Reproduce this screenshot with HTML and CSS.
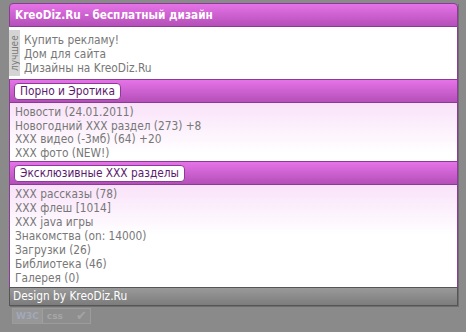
FILE: index.html
```html
<!DOCTYPE HTML>
<html>
<head>
<meta charset="UTF-8">
<link rel="stylesheet" href="styles.css">
</head>
<body>

<div class="page">
    <div class="head">KreoDiz.Ru - бесплатный дизайн</div>

    <!-- лучшее -->
    <div class="best">
        <div class="best-label">лучшее</div>
        <div class="links">
            <a href="#">Купить рекламу!</a>
            <a href="#">Дом для сайта</a>
            <a href="#">Дизайны на KreoDiz.Ru</a>
        </div>
    </div>

    <div class="bar"><span class="tab">Порно и Эротика</span></div>
    <div class="list short">
        <a href="#">Новости (24.01.2011)</a>
        <a href="#">Новогодний XXX раздел (273) +8</a>
        <a href="#">XXX видео (-3мб) (64) +20</a>
        <a href="#">XXX фото (NEW!)</a>
    </div>

    <div class="bar"><span class="tab">Эксклюзивные XXX разделы</span></div>
    <div class="list">
        <a href="#">XXX рассказы (78)</a>
        <a href="#">XXX флеш [1014]</a>
        <a href="#">XXX java игры</a>
        <a href="#">Знакомства (on: 14000)</a>
        <a href="#">Загрузки (26)</a>
        <a href="#">Библиотека (46)</a>
        <a href="#">Галерея (0)</a>
    </div>

    <div class="foot">Design by KreoDiz.Ru</div>
</div>

<div class="badge"><span class="w3c">W3C</span><span class="css">css</span><span class="tick">&#10004;</span></div>

</body>
</html>
```
FILE: styles.css
```css
html, body {
    margin: 0;
    padding: 0;
}

body {
    background-color: #8a8a8a;
    font-family: "DejaVu Sans Condensed", "DejaVu Sans", Tahoma, sans-serif;
    font-size: 11.8px;
}

.page {
    width: 449px;
    margin: 3px 0 0 9px;
    box-shadow: 1px 1px 0 #6e6e6e;
}

.head {
    height: 22px;
    line-height: 22px;
    padding-left: 5px;
    color: white;
    font-weight: bold;
    font-size: 11.7px;
    border: 1px solid #8b3a98;
    border-radius: 4px 4px 0 0;
    background: linear-gradient(#e673e8, #b44fb8);
}

.best {
    display: flex;
    height: 52px;
    background-color: white;
    border-right: 1px solid #8b3a98;
}

.best-label {
    writing-mode: vertical-rl;
    transform: rotate(180deg);
    width: 11px;
    margin: 3px 0 3px;
    background-color: #d4d4d4;
    color: #7a7a7a;
    font-size: 10px;
    line-height: 11px;
    text-align: center;
}

.links, .list {
    display: flex;
    flex-direction: column;
    padding: 2px 5px 2px;
}

.links a, .list a {
    color: #777777;
    text-decoration: none;
    line-height: 14px;
    height: 14px;
}

.links {
    padding: 6px 4px 0;
}

.list.short {
    padding: 3px 5px 0;
}

.list.short a {
    height: 13.7px;
    line-height: 13.7px;
}

.bar {
    height: 18px;
    padding: 2px 4px 2px;
    border: 1px solid #8b3a98;
    background: linear-gradient(#e673e8, #b44fb8);
}

.tab {
    display: inline-block;
    margin-top: 1px;
    padding: 0 5px;
    line-height: 15px;
    background-color: white;
    color: #5c1a6e;
    border: 1px solid #8b3a98;
    border-radius: 4px;
}

.list {
    border-left: 1px solid #8b3a98;
    border-right: 1px solid #8b3a98;
    background: linear-gradient(#f9e2f9, white 50px);
}

.foot {
    height: 17px;
    line-height: 17px;
    padding-left: 3px;
    color: white;
    border: 1px solid #555555;
    background: linear-gradient(#9a9a9a, #7c7c7c);
}

.badge {
    display: flex;
    align-items: center;
    width: 77px;
    height: 14px;
    margin: 2px 0 0 12px;
    border: 1px solid #9c9c9c;
    background-color: #8e8e8e;
    font-family: "DejaVu Sans", sans-serif;
    font-size: 9px;
    font-weight: bold;
    color: #a6a6a6;
}

.w3c {
    padding: 0 3px;
    height: 14px;
    line-height: 14px;
    color: #a2a8b8;
    background-color: #979797;
    border-right: 1px solid #a0a0a0;
}

.css {
    padding-left: 4px;
    flex: 1;
}

.tick {
    padding-right: 3px;
    font-size: 13px;
    color: #a4a4a4;
}
```
